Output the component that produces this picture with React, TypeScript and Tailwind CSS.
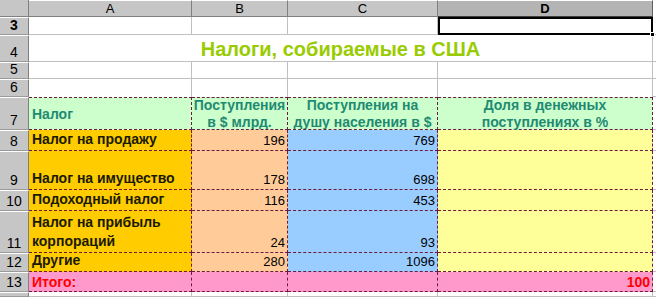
import React from "react";

// ======= DATA =======
interface TaxRow {
  n: number;
  name: React.ReactNode;
  revenue: string;
  perCapita: string;
}

const rows: TaxRow[] = [
  { n: 8, name: "Налог на продажу", revenue: "196", perCapita: "769" },
  { n: 9, name: "Налог на имущество", revenue: "178", perCapita: "698" },
  { n: 10, name: "Подоходный налог", revenue: "116", perCapita: "453" },
  {
    n: 11,
    name: (
      <>
        Налог на прибыль
        <br />
        корпораций
      </>
    ),
    revenue: "24",
    perCapita: "93",
  },
  { n: 12, name: "Другие", revenue: "280", perCapita: "1096" },
];

// ======= CELLS =======
const RowHead: React.FC<{ n: number | string; bold?: boolean; top?: boolean }> = ({ n, bold, top }) => (
  <div
    className={`flex justify-center overflow-hidden bg-[#c6c6c6] border-t border-t-white border-r border-r-[#808080] border-b border-b-[#9a9a9a] text-[14px] leading-[16px] text-black ${
      top ? "items-start pt-[1px]" : "items-end pb-[1px]"
    } ${bold ? "font-bold" : ""}`}
  >
    {n}
  </div>
);

const Plain: React.FC<{ noBottom?: boolean }> = ({ noBottom }) => (
  <div className={`bg-white border-r border-[#c0c0c0] ${noBottom ? "" : "border-b"}`} />
);

const dash = "border-r border-b border-dashed border-[#6e1a40]";

const Filler: React.FC = () => <div className="bg-white border-b border-[#c0c0c0]" />;

const App: React.FC = () => {
  return (
    <div className="w-[656px] h-[297px] overflow-hidden bg-white font-['Liberation_Sans',Arial,sans-serif]">
      <div className="grid grid-cols-[29px_163px_96px_150px_215px_3px] grid-rows-[17px_18px_27px_17px_18px_33px_21px_39px_21px_42px_19px_20px_5px]">
        {/* Заголовки столбцов */}
        <div className="bg-[#c6c6c6] border-r border-b border-[#808080]" />
        {["A", "B", "C"].map((l) => (
          <div
            key={l}
            className="flex items-center justify-center bg-[#c6c6c6] border-t border-t-white border-r border-r-[#808080] border-b border-b-[#808080] text-[13px] text-black"
          >
            {l}
          </div>
        ))}
        <div className="flex items-center justify-center bg-[#b4b4b4] border-t border-t-white border-r border-r-[#606060] border-b border-b-[#404040] text-[13px] font-bold text-black">
          D
        </div>
        <div className="bg-white" />

        {/* Строка 3 */}
        <RowHead n={3} bold />
        <Plain />
        <Plain />
        <Plain />
        <div className="relative bg-white border-2 border-black">
          <div className="absolute -right-[4px] -bottom-[4px] w-[5px] h-[5px] bg-black border border-white" />
        </div>
        <Filler />

        {/* Строка 4 — заголовок */}
        <RowHead n={4} />
        <div className="col-span-4 flex items-end justify-center bg-white border-r border-b border-[#c0c0c0] text-[20px] leading-[23px] font-bold text-[#99cc00]">
          Налоги, собираемые в США
        </div>
        <Filler />

        {/* Строки 5, 6 */}
        <RowHead n={5} />
        <Plain />
        <Plain />
        <Plain />
        <Plain />
        <Filler />

        <RowHead n={6} />
        <Plain noBottom />
        <Plain noBottom />
        <Plain noBottom />
        <Plain noBottom />
        <Filler />

        {/* Строка 7 — шапка таблицы */}
        <RowHead n={7} />
        <div className={`${dash} border-t flex items-center pl-[3px] pt-[2px] bg-[#ccffcc] text-[14px] font-bold text-[#1f8a72]`}>
          Налог
        </div>
        <div className={`${dash} border-t flex items-center justify-center bg-[#ccffcc] text-[14px] leading-[17px] font-bold text-[#1f8a72] text-center whitespace-nowrap overflow-hidden`}>
          <span>
            Поступления
            <br />в $ млрд.
          </span>
        </div>
        <div className={`${dash} border-t flex items-center justify-center bg-[#ccffcc] text-[14px] leading-[17px] font-bold text-[#1f8a72] text-center whitespace-nowrap overflow-hidden`}>
          <span>
            Поступления на
            <br />
            душу населения в $
          </span>
        </div>
        <div className={`${dash} border-t flex items-center justify-center bg-[#ccffcc] text-[14px] leading-[17px] font-bold text-[#1f8a72] text-center whitespace-nowrap`}>
          <span>
            Доля в денежных
            <br />
            поступлениях в %
          </span>
        </div>
        <Filler />

        {/* Данные */}
        {rows.map((r) => (
          <React.Fragment key={r.n}>
            <RowHead n={r.n} />
            <div className={`${dash} flex items-end pl-[3px] pb-[1px] bg-[#ffcc00] text-[14px] leading-[19px] font-bold text-[#1a1a00] whitespace-nowrap`}>
              <span>{r.name}</span>
            </div>
            <div className={`${dash} flex items-end justify-end pr-[2px] pb-[1px] bg-[#ffcc99] text-[13px] leading-[16px] text-black`}>
              {r.revenue}
            </div>
            <div className={`${dash} flex items-end justify-end pr-[2px] pb-[1px] bg-[#99ccff] text-[13px] leading-[16px] text-black`}>
              {r.perCapita}
            </div>
            <div className={`${dash} bg-[#ffff99]`} />
            <Filler />
          </React.Fragment>
        ))}

        {/* Строка 13 — итог */}
        <RowHead n={13} />
        <div className={`${dash} flex items-end pl-[3px] pb-[1px] bg-[#ff99cc] text-[14px] leading-[16px] font-bold text-[#ff0000]`}>
          Итого:
        </div>
        <div className={`${dash} bg-[#ff99cc]`} />
        <div className={`${dash} bg-[#ff99cc]`} />
        <div className={`${dash} flex items-end justify-end pr-[2px] pb-[1px] bg-[#ff99cc] text-[14px] leading-[16px] font-bold text-[#ff0000]`}>
          100
        </div>
        <Filler />

        {/* Строка 14 */}
        <RowHead n={14} top />
        <Plain />
        <Plain />
        <Plain />
        <Plain />
        <Filler />
      </div>
    </div>
  );
};

export default App;
